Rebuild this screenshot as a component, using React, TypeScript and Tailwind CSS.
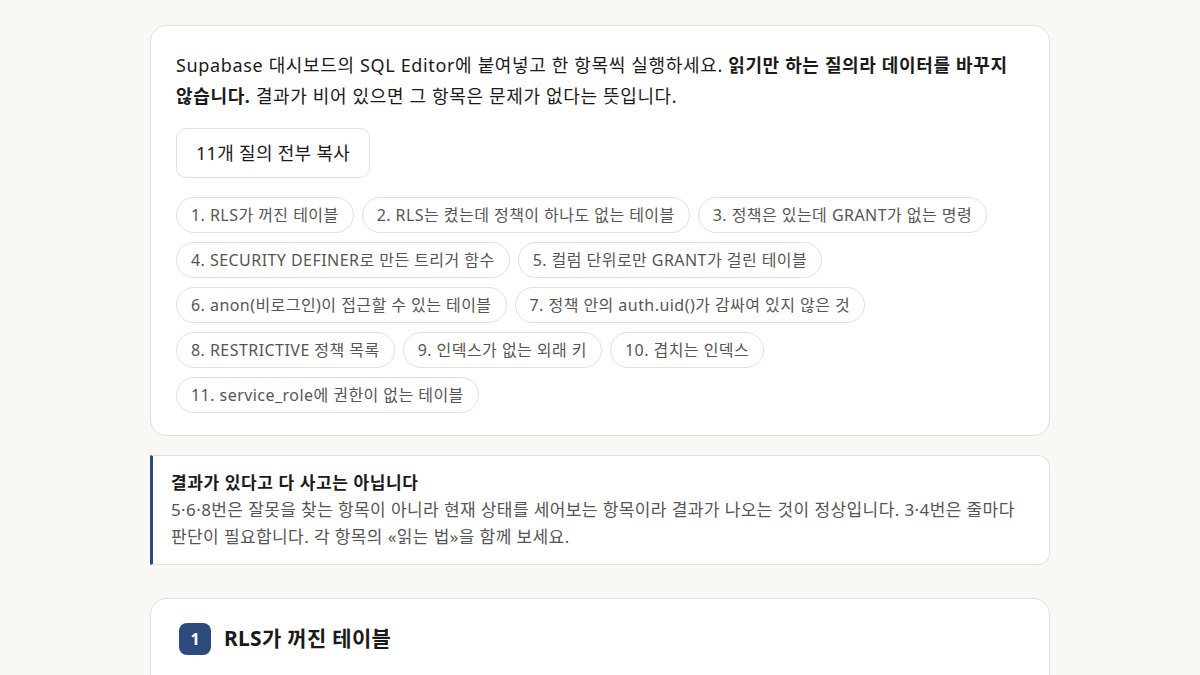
const chips = [
  '1. RLS가 꺼진 테이블',
  '2. RLS는 켰는데 정책이 하나도 없는 테이블',
  '3. 정책은 있는데 GRANT가 없는 명령',
  '4. SECURITY DEFINER로 만든 트리거 함수',
  '5. 컬럼 단위로만 GRANT가 걸린 테이블',
  '6. anon(비로그인)이 접근할 수 있는 테이블',
  '7. 정책 안의 auth.uid()가 감싸여 있지 않은 것',
  '8. RESTRICTIVE 정책 목록',
  '9. 인덱스가 없는 외래 키',
  '10. 겹치는 인덱스',
  '11. service_role에 권한이 없는 테이블',
];

export default function App() {
  return (
    <div
      className="min-h-screen bg-[#faf8f4] pt-[25px] text-[#1a1a1a] break-keep"
      style={{ fontFamily: '"Noto Sans", "Noto Sans CJK KR", sans-serif' }}
    >
      <div className="mx-auto w-[900px]">
        {/* intro card */}
        <section className="rounded-2xl border border-[#e5e0d8] bg-white px-[25px] pt-[24px] pb-[22px]">
          <p className="text-[18px] leading-[31px] tracking-[0.65px]">
            Supabase 대시보드의 SQL Editor에 붙여넣고 한 항목씩 실행하세요.{' '}
            <strong className="font-bold">읽기만 하는 질의라 데이터를 바꾸지 않습니다.</strong> 결과가 비어
            있으면 그 항목은 문제가 없다는 뜻입니다.
          </p>
          <button className="mt-[16px] h-[50px] rounded-[10px] border border-[#e5e0d8] bg-white px-[19px] text-[18px] tracking-[0.3px]">
            11개 질의 전부 복사
          </button>
          <div className="mt-[19px] flex flex-wrap gap-x-[8px] gap-y-[9px]">
            {chips.map(c => (
              <span
                key={c}
                className="flex h-[36px] items-center rounded-full border border-[#e5e0d8] bg-white px-[14px] text-[16px] tracking-[0.45px] text-[#555]"
              >
                {c}
              </span>
            ))}
          </div>
        </section>

        {/* callout */}
        <section className="mt-[19px] rounded-r-xl border border-l-[3px] border-[#e5e0d8] border-l-[#2c4a7c] bg-white px-[18px] pt-[13px] pb-[14px]">
          <h3 className="text-[17px] font-bold leading-[27px] tracking-[0.6px]">결과가 있다고 다 사고는 아닙니다</h3>
          <p className="text-[17px] leading-[27px] tracking-[0.4px] text-[#555]">
            5·6·8번은 잘못을 찾는 항목이 아니라 현재 상태를 세어보는 항목이라 결과가 나오는 것이 정상입니다. 3·4번은
            줄마다 판단이 필요합니다. 각 항목의 «읽는 법»을 함께 보세요.
          </p>
        </section>

        {/* section 1 */}
        <section className="mt-[33px] h-[200px] rounded-2xl border border-[#e5e0d8] bg-white px-[28px] pt-[24px]">
          <div className="flex items-center gap-[13px]">
            <span className="flex h-[32px] w-[32px] items-center justify-center rounded-[8px] bg-[#2c4a7c] text-[16px] font-bold text-white">
              1
            </span>
            <h2 className="text-[21px] font-bold tracking-[0.3px]">RLS가 꺼진 테이블</h2>
          </div>
        </section>
      </div>
    </div>
  );
}
